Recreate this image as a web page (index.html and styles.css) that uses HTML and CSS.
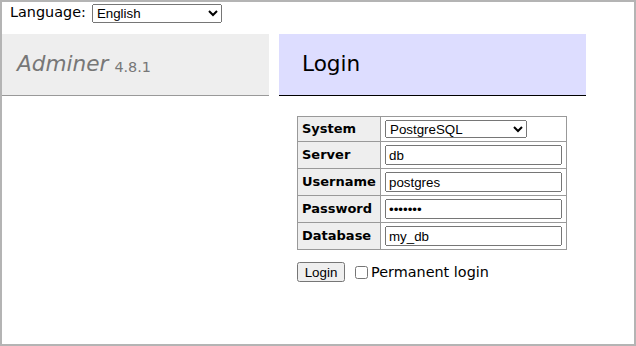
FILE: index.html
```html
<!DOCTYPE html>
<html lang="en">
<head>
  <meta charset="UTF-8" />
  <title>Login - Adminer</title>
  <link rel="stylesheet" href="styles.css">
</head>
<body>
  <div class="frame">
    <form class="lang">
      Language:
      <select class="lang-select">
        <option>English</option>
      </select>
    </form>

    <div class="layout">
      <div class="menu">
        <h1><span class="brand">Adminer</span> <span class="version">4.8.1</span></h1>
      </div>

      <div class="content">
        <h2>Login</h2>
        <form>
          <table class="login-table">
            <tr>
              <th>System</th>
              <td>
                <select class="system-select">
                  <option>PostgreSQL</option>
                </select>
              </td>
            </tr>
            <tr>
              <th>Server</th>
              <td><input type="text" value="db"></td>
            </tr>
            <tr>
              <th>Username</th>
              <td><input type="text" value="postgres"></td>
            </tr>
            <tr>
              <th>Password</th>
              <td><input type="password" value="postgre"></td>
            </tr>
            <tr>
              <th>Database</th>
              <td><input type="text" value="my_db"></td>
            </tr>
          </table>
          <div class="actions">
            <button type="button" class="login-btn">Login</button>
            <label class="permanent"><input type="checkbox"> Permanent login</label>
          </div>
        </form>
      </div>
    </div>
  </div>
</body>
</html>
```

FILE: styles.css
```css
body {
  margin: 0;
  background: #fff;
  color: #000;
  font: 14.4px/1.25 "DejaVu Sans", Verdana, sans-serif;
}
.frame {
  height: 346px;
  box-sizing: border-box;
  border: 2px solid #b4b4b4;
}
.lang {
  height: 32px;
  padding: 0 8px;
  display: flex;
  align-items: flex-start;
  gap: 6px;
  line-height: 19px;
  padding-top: 1px;
  box-sizing: border-box;
}
select, input, button {
  font-family: "Liberation Sans", Arial, sans-serif;
  font-size: 13.33px;
  color: #000;
}
.lang-select {
  width: 130px;
  height: 19px;
  margin-top: 1px;
}
.layout {
  display: flex;
}
.menu {
  width: 267px;
}
h1 {
  margin: 0;
  height: 61px;
  padding: 0 0 0 15px;
  display: flex;
  align-items: center;
  gap: 6px;
  font-size: 21.6px;
  font-weight: normal;
  color: #777;
  background: #eee;
  border-bottom: 1px solid #999;
}
.brand {
  font-style: italic;
}
.version {
  font-size: 14.4px;
  padding-top: 5px;
}
.content {
  margin-left: 10px;
}
h2 {
  margin: 0 0 20px 0;
  width: 307px;
  height: 61px;
  box-sizing: content-box;
  padding: 0 0 0 23px;
  display: flex;
  align-items: center;
  font-size: 21.6px;
  font-weight: normal;
  background: #ddf;
  border-bottom: 1px solid #000;
  box-sizing: border-box;
  height: 62px;
}
form {
  margin: 0;
}
.login-table {
  margin-left: 18px;
  border-collapse: collapse;
  font-size: 13px;
}
.login-table th,
.login-table td {
  border: 1px solid #999;
  padding: 3px 4px;
}
.login-table th {
  background: #eee;
  text-align: left;
  width: 74px;
}
.login-table td {
  width: 177px;
}
.login-table input {
  width: 177px;
  height: 20px;
  box-sizing: border-box;
  margin: 0;
  padding: 1px 2px;
}
.system-select {
  width: 142px;
  height: 18px;
  margin: 0;
}
.actions {
  margin: 12px 0 0 18px;
  display: flex;
  align-items: center;
  gap: 10px;
}
.login-btn {
  width: 48px;
  height: 20px;
  padding: 0;
}
.permanent {
  display: flex;
  align-items: center;
}
.permanent input {
  margin: 0 3px 0 0;
  width: 13px;
  height: 13px;
}
```
